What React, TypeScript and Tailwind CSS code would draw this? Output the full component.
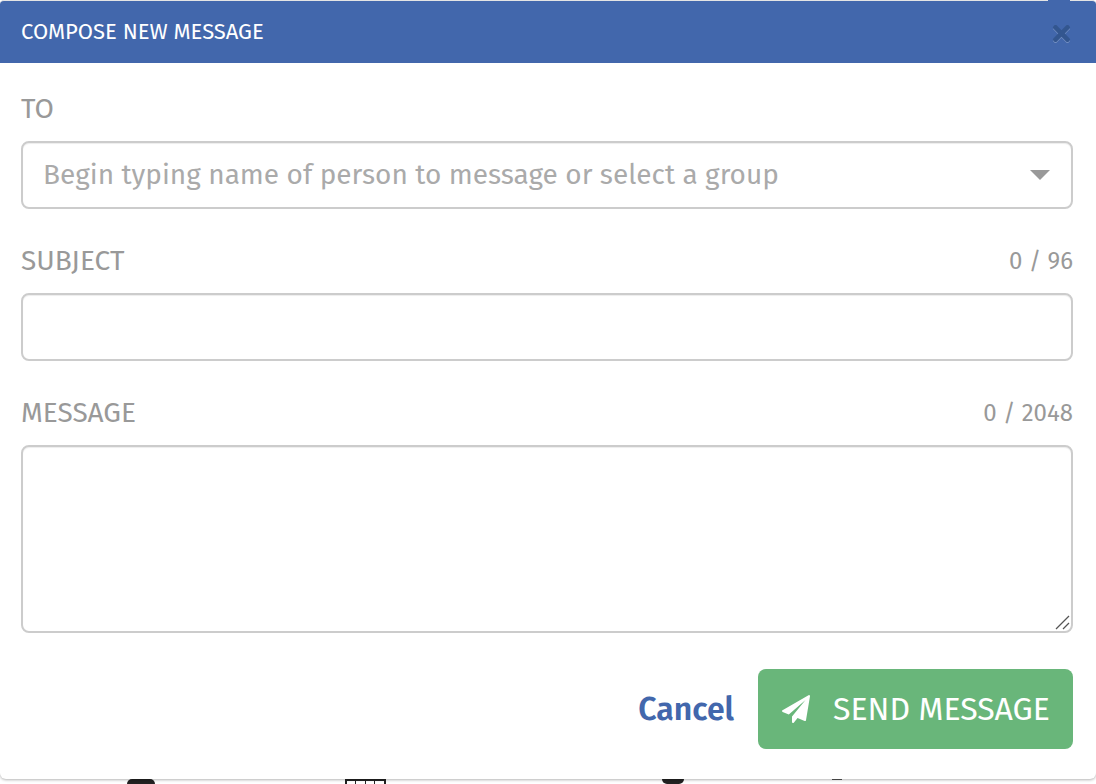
import { FaTimes } from 'react-icons/fa';

const font = "font-['Fira_Sans','Noto_Sans','Open_Sans',sans-serif]";

function FieldLabel({ label, count }: { label: string; count?: string }) {
  return (
    <div className="flex h-[26px] items-center justify-between">
      <span className="text-[28px] leading-none text-[#999999]">{label}</span>
      {count && <span className="text-[24px] leading-none text-[#999999]">{count}</span>}
    </div>
  );
}

const boxClass = 'rounded-[8px] border-2 border-[#cccccc] shadow-[inset_0_1px_1px_rgba(0,0,0,0.075)]';

function PaperPlane() {
  return (
    <svg width="28" height="28" viewBox="0 0 1792 1792" className="shrink-0" fill="#ffffff">
      <path d="M1764 11q33 24 27 64l-256 1536q-5 29-32 45-14 8-31 8-11 0-24-5l-453-185-242 295q-18 23-49 23-13 0-22-4-19-7-30.5-23.5t-11.5-36.5v-349l864-1059-1069 925-395-162q-37-14-40-55-2-40 32-59l1664-960q15-9 32-9 20 0 36 11z" />
    </svg>
  );
}

export default function App() {
  return (
    <div className={`relative h-[784px] w-[1096px] overflow-hidden bg-white ${font}`}>
      {/* things behind the modal that peek out below it */}
      <div className="absolute bottom-0 left-[127px] h-[5px] w-[28px] rounded-t-[10px] bg-[#222222]" />
      <div className="absolute bottom-0 left-[345px] grid h-[5px] w-[41px] grid-cols-4 border-x-2 border-t-2 border-[#222222]">
        <div className="border-r border-[#222222]" />
        <div className="border-r border-[#222222]" />
        <div className="border-r border-[#222222]" />
        <div />
      </div>
      <div className="absolute bottom-0 left-[662px] h-[5px] w-[22px] rounded-b-[12px] bg-[#222222]" />
      <div className="absolute bottom-[4px] left-[832px] h-[1px] w-[10px] bg-[#555555]" />

      <div className="relative h-[779px] w-[1096px] rounded-b-[6px] bg-white shadow-[0_1px_3px_rgba(0,0,0,0.3)]">
        <header className="relative flex h-[63px] items-center justify-between rounded-t-[4px] border-t border-[#e4e4e4] bg-[#4267ac] pl-[21px] pr-[24px]">
          <h1 className="text-[22px] font-normal leading-none text-white">COMPOSE NEW MESSAGE</h1>
          <FaTimes size={25} className="mt-[2px] mr-[-2px] text-[#33568f] drop-shadow-[0_1px_0_rgba(255,255,255,0.25)]" />
          <div className="absolute left-[1048px] top-[-1px] h-[1px] w-[22px] bg-[#4267ac]" />
        </header>

        <div className="flex flex-col px-[21px] pr-[23px] pt-[33px]">
          <FieldLabel label="TO" />
          <div className={`mt-[19px] flex h-[68px] items-center justify-between pl-[20px] pr-[21px] ${boxClass}`}>
            <span className="text-[28px] leading-none text-[#aaaaaa]">
              Begin typing name of person to message or select a group
            </span>
            <div className="h-0 w-0 border-x-[10px] border-t-[10px] border-x-transparent border-t-[#999999]" />
          </div>

          <div className="mt-[39px]">
            <FieldLabel label="SUBJECT" count="0 / 96" />
          </div>
          <div className={`mt-[19px] h-[68px] ${boxClass}`} />

          <div className="mt-[39px]">
            <FieldLabel label="MESSAGE" count="0 / 2048" />
          </div>
          <div className={`relative mt-[19px] h-[188px] ${boxClass}`}>
            <svg width="16" height="16" viewBox="0 0 16 16" className="absolute bottom-0 right-0" stroke="#555555" strokeWidth="1.2">
              <path d="M1 14 L14 1" />
              <path d="M8 14 L14 8" />
            </svg>
          </div>

          <div className="mt-[36px] flex items-center justify-end">
            <a className="mr-[24px] text-[32px] font-semibold leading-none text-[#4267ac]">Cancel</a>
            <button className="flex h-[80px] w-[315px] items-center gap-[23px] rounded-[8px] bg-[#69b67a] pl-[24px] text-white">
              <PaperPlane />
              <span className="text-[32px] leading-none">SEND MESSAGE</span>
            </button>
          </div>
        </div>
      </div>
    </div>
  );
}
